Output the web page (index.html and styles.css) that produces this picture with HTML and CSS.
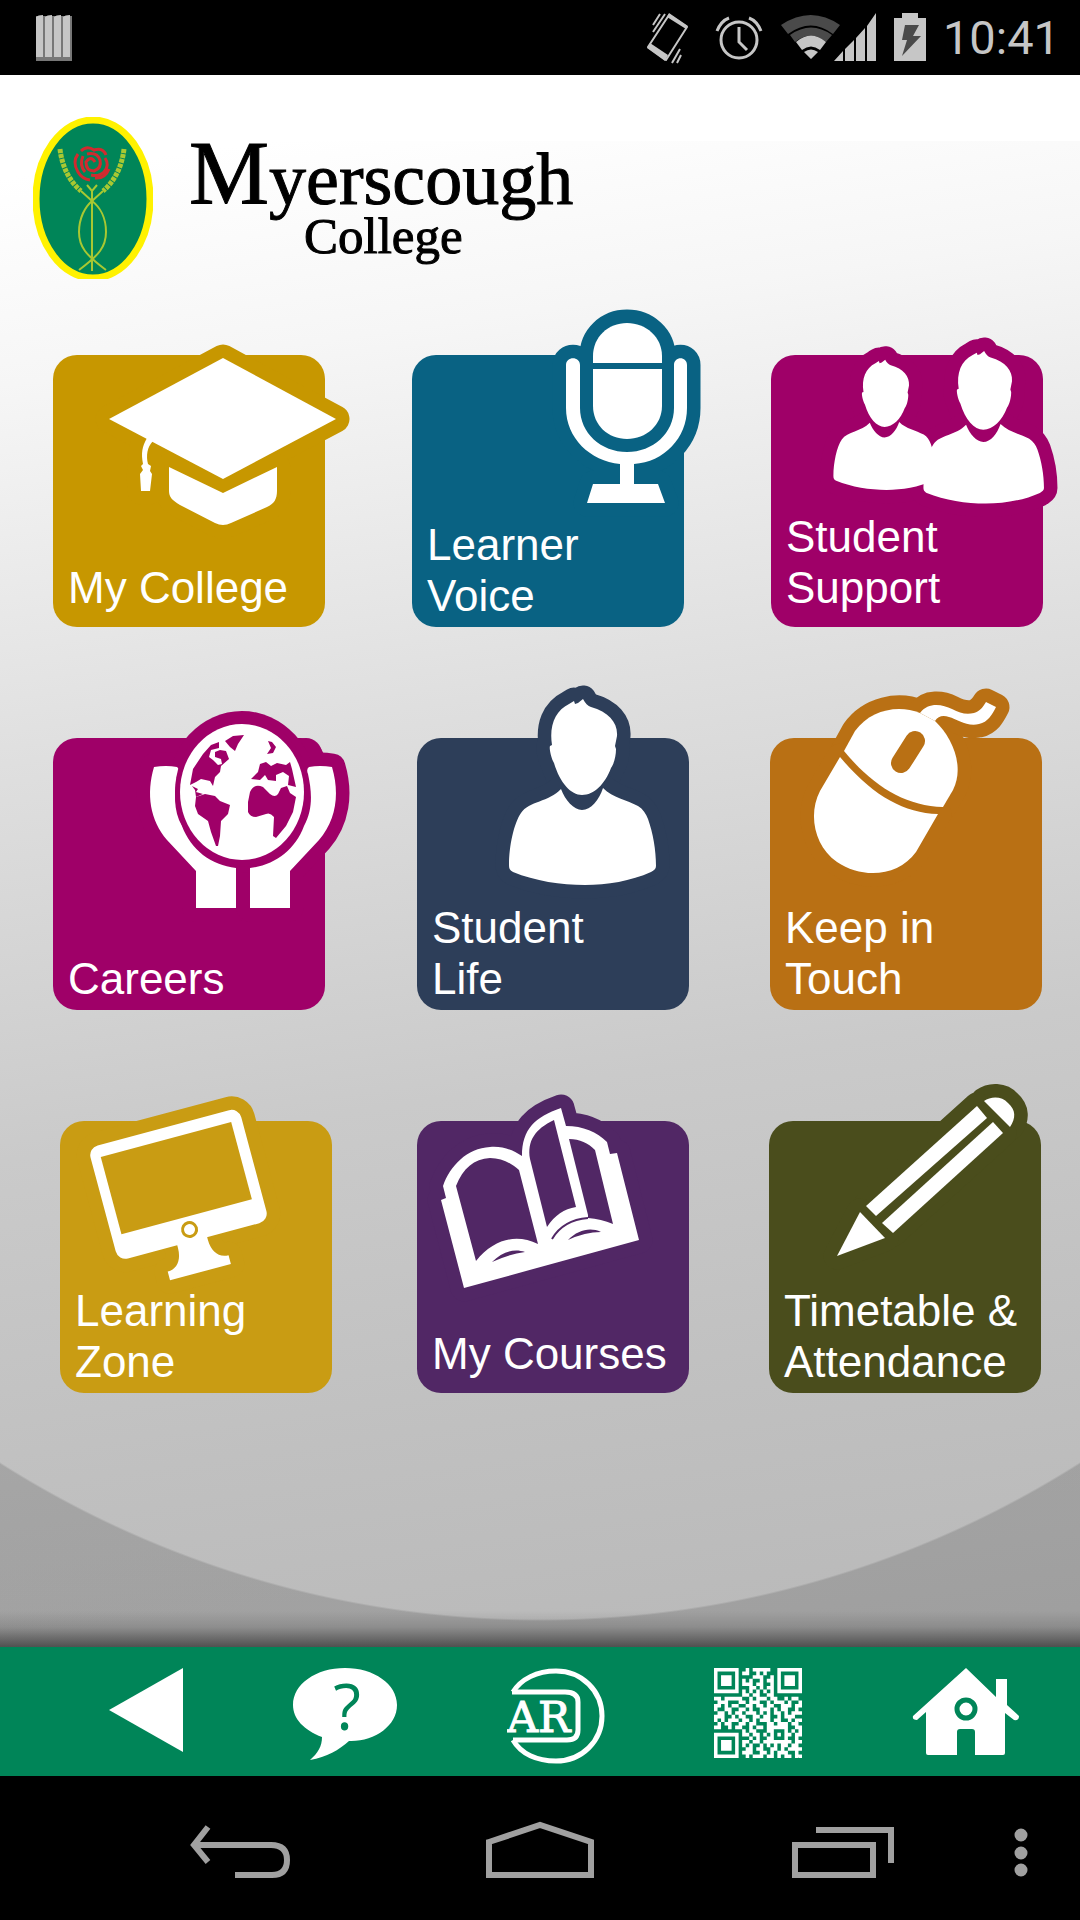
FILE: index.html
```html
<!DOCTYPE html>
<html lang="en">
<head>
  <meta charset="UTF-8" />
  <meta name="viewport" content="width=device-width, initial-scale=1.0" />
  <title>Myerscough College</title>
  <link rel="stylesheet" href="styles.css">
</head>
<body>
  <!-- shapes shared by the tiles, each drawn once as an outline and once in white -->
  <svg class="defs" aria-hidden="true">
    <defs>
      <g id="cap">
        <path d="M170 3L283 64L170 124L56 64Z"/>
        <path d="M116 112L170 138L224 112V136C224 144 221 149 214 152L178 168Q170 172 162 168L127 150C119 145 116 142 116 136Z"/>
        <path d="M94 83L100 86C94 92 93 101 95 109L98 111L97 116L99 119L97 136H88L87 119L90 115L88 111L90 109C88 98 89 92 94 83Z"/>
      </g>
      <g id="mic">
        <path d="M181 8V1C181-18 196-32 215-32S250-18 250 1V8Z"/>
        <path d="M181 14H250V51C250 70 234 84 215 84S181 70 181 51Z"/>
        <path d="M154 10C154 1 168 1 168 10V53C168 78 189 97 215 97S262 78 262 53V10C262 1 275 1 275 10V53C275 83 252 107 222 109V129H246L253 148H175L181 129H208V109C178 106 154 83 154 53Z"/>
      </g>
      <g id="person">
        <path vector-effect="non-scaling-stroke" d="M166-39C168-35 171-32 174-31C192-26 201-15 200-2L198 8L199 11C199 18 197 26 194 30C188 46 177 57 165 57C154 57 143 45 137 25C134 20 132 10 133 8L135 7C132-12 138-27 152-34L157-37L158-34L161-35Z"/>
        <path vector-effect="non-scaling-stroke" d="M144 51C148 62 157 72 165 72C174 72 182 62 186 50C196 60 210 62 221 68C226 71 229 76 231 81C236 95 239 112 239 128C239 131 237 132 234 134C214 143 190 147 168 147C144 147 118 143 96 134C93 132 92 131 92 127C92 108 97 85 104 75C112 63 132 64 144 51Z"/>
      </g>
      <g id="people">
        <use href="#person" transform="translate(-2 32) scale(.7)"/>
        <use href="#person" transform="translate(77 28) scale(.82)"/>
      </g>
      <g id="arm">
        <path d="M101 29Q113 27 124 29Q127 31 125 36C121 54 120 72 129 88C138 112 158 127 183 130V170H143V133L114 102C97 82 93 56 101 29Z"/>
      </g>
      <g id="hands">
        <use href="#arm"/>
        <use href="#arm" transform="matrix(-1 0 0 1 380 0)"/>
      </g>
      <g id="mouse">
        <path d="M74 13L85-7C100-28 128-34 150-25L165-17C182-1 195 28 183 52L173 69C135 68 103 48 74 13Z"/>
        <path d="M70 19L50 53C38 76 44 108 67 124C92 141 128 139 146 114L168 76C133 75 102 57 70 19Z"/>
        <path d="M150-25C158-36 172-34 182-29C190-25 196-23 204-25C210-27 213-31 216-36L226-31C222-23 218-16 209-14C197-11 187-19 179-21C173-23 168-22 165-17Z"/>
      </g>
      <g id="monitor">
        <rect width="156" height="117" rx="10"/>
        <path d="M61 114V120C61 132 55 140 45 140V149H108V140C98 140 92 132 92 120V114Z"/>
      </g>
      <g id="book">
        <path d="M24 79L29 77L26 65C33 45 50 27 73 26C86 25 96 29 105 35C105 8 118-4 144-13L149 5C166 5 180 11 190 21L193 33L200 32L222 119L47 167Z"/>
      </g>
      <g id="pencil">
        <path d="M215-20C222-25 233-25 239-18C247-11 247-3 241 6Z"/>
        <path d="M208-15L218-3L107 95L97 85Z"/>
        <path d="M224 1L234 12L124 112L113 102Z"/>
        <path d="M91 91L116 117L68 135Z"/>
      </g>
    </defs>
  </svg>

  <header class="status">
    <svg class="status-left" width="36" height="46" viewBox="0 0 36 46" aria-hidden="true">
      <path fill="#777" d="M0 1h36v45H0z"/>
      <path fill="#c6c6c6" d="M0 2q2-2 7-2v42H0zM9 2q2-2 7-2v42H9zM18 2q2-2 7-2v42h-7zM27 2q2-2 7-2v42h-7z"/>
    </svg>
    <svg width="54" height="52" viewBox="0 0 54 52" aria-hidden="true">
      <path fill="none" stroke="#c6c6c6" stroke-width="2" stroke-linejoin="round" d="M24 3L42 15L21 48L3 35Z"/>
      <path fill="#c6c6c6" d="M24 1L43 14L41 17L22 5ZM5 31L23 43L20 49L2 36Z"/>
      <path stroke="#c6c6c6" stroke-width="2" d="M8 13l7-11M8 20L20 2M27 51l8-14M32 51l4-8"/>
    </svg>
    <svg width="48" height="52" viewBox="0 0 48 52" aria-hidden="true">
      <g fill="none" stroke="#c6c6c6" stroke-width="3">
        <circle cx="24" cy="28" r="18"/>
        <path d="M2 19Q6 9 14 6M46 19Q42 9 34 6"/>
        <path d="M24 15V30L32 38"/>
      </g>
    </svg>
    <svg width="98" height="52" viewBox="0 0 98 52" aria-hidden="true">
      <path fill="#4a4a4a" d="M2 13Q32-7 61 13L54 22Q32 5 9 22ZM11 23Q32 8 53 23L47 30Q32 17 16 30Z"/>
      <path fill="#c6c6c6" d="M17 30Q32 17 47 30L41 38Q32 31 23 38ZM25 40Q32 35 39 40L32 47Z"/>
      <path fill="#c6c6c6" d="M55 49L64 39V49ZM66 37L75 28V49H66ZM77 26L86 16V49H77ZM88 14L97 1V49H88Z"/>
    </svg>
    <svg width="34" height="52" viewBox="0 0 34 52" aria-hidden="true">
      <path fill="#c6c6c6" d="M9 1H25V6H33V49H1V6H9Z"/>
      <path fill="#4a4a4a" d="M12 13H26L20 24H28L9 44L14 28H9Z"/>
    </svg>
    <time class="clock">10:41</time>
  </header>

  <main class="home">
    <div class="brand">
      <svg width="120" height="162" viewBox="0 0 120 162" aria-hidden="true">
        <ellipse cx="60" cy="82" rx="57" ry="79" fill="#008558" stroke="#fff200" stroke-width="7"/>
        <g fill="none" stroke="#a8c832" stroke-width="2">
          <path d="M59 74V154M54 68L59 74L64 68"/>
          <path d="M48 74L59 84C67 90 73 101 73 115C73 130 66 138 46 153"/>
          <path d="M70 74L59 84C52 90 46 101 46 115C46 130 53 138 73 153"/>
        </g>
        <g fill="none" stroke="#a8c832" stroke-width="5" stroke-dasharray="4 1">
          <path d="M27 32C29 50 37 65 48 74M91 32C89 50 81 65 70 74"/>
        </g>
        <g fill="none" stroke="#d12a2f" stroke-width="3">
          <path d="M45 37Q39 45 45 55Q49 62 57 63M48 34Q54 28 61 33Q70 30 73 38M50 39Q46 48 52 55M54 37Q64 35 67 43Q69 51 61 54Q53 54 53 45Q58 38 62 45M72 41Q77 48 71 55Q66 60 58 58M62 61Q72 62 76 52"/>
        </g>
      </svg>
      <h1 class="brand-name">
        <span class="brand-top"><span class="brand-m">M</span>yerscough</span>
        <span class="brand-sub">College</span>
      </h1>
    </div>

    <nav class="tiles">
      <div class="row row-first">
        <a class="tile gold" href="#my-college">
          <svg class="art" viewBox="0 0 272 272" aria-hidden="true">
            <use class="halo" href="#cap"/>
            <use class="shape" href="#cap"/>
          </svg>
          <span class="label label-high">My College</span>
        </a>
        <a class="tile teal" href="#learner-voice">
          <svg class="art" viewBox="0 0 272 272" aria-hidden="true">
            <use class="halo" href="#mic"/>
            <use class="shape" href="#mic"/>
          </svg>
          <span class="label">Learner<br>Voice</span>
        </a>
        <a class="tile magenta" href="#student-support">
          <svg class="art" viewBox="0 0 272 272" aria-hidden="true">
            <use class="halo" href="#people"/>
            <use class="shape" href="#people"/>
          </svg>
          <span class="label label-high">Student<br>Support</span>
        </a>
      </div>

      <div class="row row-second">
        <a class="tile magenta" href="#careers">
          <svg class="art" viewBox="0 0 272 272" aria-hidden="true">
            <use class="halo" href="#hands"/>
            <circle class="cut" cx="253" cy="16" r="16"/>
            <ellipse class="cut" cx="189" cy="54" rx="75" ry="81"/>
            <use class="shape" href="#hands"/>
            <ellipse class="cut" cx="189" cy="54" rx="67" ry="75"/>
            <ellipse class="shape" cx="189" cy="54" rx="62" ry="68"/>
            <g class="cut">
              <path d="M166 4L158 7L150 16L140 31L137 47L143 44L148 41L157 43L160 48L162 39L167 34L168 28L176 21L173 13L167 12L162 14V19L168 21L169 26L165 27L160 22L156 19L158 12L166 10Z"/>
              <path d="M139 48L145 51L143 54L150 56L143 59L142 52Z"/>
              <path d="M172 3L180-2L191-3L185 6L182 13L177 9Z"/>
              <path d="M143 59L152 56L162 58L167 63L177 67L175 76L168 83L167 98L165 108H163L158 94L155 83L145 76L142 68Z"/>
              <path d="M197 54Q201 45 210 49L217 56Q222 60 225 56L228 50L234 48L237 55L243 59L240 74L233 88L223 100L220 98L221 79Q217 74 213 76L203 79Q197 79 195 74V64Z"/>
              <path d="M198 41L205 34L207 26L213 24L218 28L224 25L233 27L237 24L239 31L243 49L235 47L236 38L230 34L223 37V43L215 42L212 37L207 42Z"/>
              <path d="M215 3L219 4L223 9L220 15L214 16L218 10Z"/>
            </g>
          </svg>
          <span class="label">Careers</span>
        </a>
        <a class="tile navy" href="#student-life">
          <svg class="art" viewBox="0 0 272 272" aria-hidden="true">
            <use class="halo" href="#person"/>
            <use class="shape" href="#person"/>
          </svg>
          <span class="label">Student<br>Life</span>
        </a>
        <a class="tile orange" href="#keep-in-touch">
          <svg class="art" viewBox="0 0 272 272" aria-hidden="true">
            <use class="halo" href="#mouse"/>
            <use class="shape" href="#mouse"/>
            <path class="line" stroke-width="20" stroke-linecap="round" d="M145 3L131 25"/>
          </svg>
          <span class="label">Keep in<br>Touch</span>
        </a>
      </div>

      <div class="row row-third">
        <a class="tile amber" href="#learning-zone">
          <svg class="art" viewBox="0 0 272 272" aria-hidden="true">
            <g transform="translate(28 27) rotate(-15)">
              <use class="halo" href="#monitor"/>
              <use class="shape" href="#monitor"/>
              <rect class="cut" x="10" y="12" width="135" height="80"/>
              <circle class="line" stroke-width="3" cx="77" cy="105" r="7"/>
            </g>
          </svg>
          <span class="label">Learning<br>Zone</span>
        </a>
        <a class="tile purple" href="#my-courses">
          <svg class="art" viewBox="0 0 272 272" aria-hidden="true">
            <use class="halo" href="#book"/>
            <use class="shape" href="#book"/>
            <g class="cut">
              <path d="M39 65C46 47 57 38 73 37C85 37 94 42 102 49L121 123C100 113 78 117 59 140Z"/>
              <path d="M137-1C118 8 110 20 113 38L130 106C138 94 147 88 159 86Z"/>
              <path d="M152 18C163 18 171 22 178 29L196 103Q184 98 171 97V94Z"/>
              <path d="M75 141C85 131 97 127 108 131Q92 133 75 141ZM151 119C161 109 173 106 184 111Q168 111 151 119Z"/>
            </g>
            <path class="line" stroke-width="2" d="M135 118Q146 99 171 97"/>
          </svg>
          <span class="label label-high">My Courses</span>
        </a>
        <a class="tile olive" href="#timetable">
          <svg class="art" viewBox="0 0 272 272" aria-hidden="true">
            <use class="halo" href="#pencil"/>
            <use class="shape" href="#pencil"/>
          </svg>
          <span class="label">Timetable &amp;<br>Attendance</span>
        </a>
      </div>
    </nav>
  </main>

  <nav class="toolbar">
    <a href="#back" aria-label="Back">
      <svg width="74" height="96" viewBox="0 0 74 96"><path fill="#fff" d="M74 0V84L0 42Z"/></svg>
    </a>
    <a href="#help" aria-label="Help">
      <svg class="help" width="104" height="96" viewBox="0 0 104 96">
        <path fill="#fff" d="M52 0C81 0 104 16 104 37S81 74 56 73C46 82 34 89 17 92C25 85 29 78 29 69C11 62 0 51 0 37C0 16 23 0 52 0Z"/>
        <text class="mark" x="54" y="62">?</text>
      </svg>
    </a>
    <a href="#ar" aria-label="Augmented reality">
      <svg width="98" height="96" viewBox="0 0 98 96">
        <g fill="none" stroke="#fff" stroke-width="5">
          <path d="M6 24C14 11 30 3 49 3C75 3 95 23 95 48S75 93 49 93C30 93 14 86 6 72"/>
          <path d="M5 24H58Q71 24 71 34V62Q71 72 60 72H6"/>
        </g>
        <text class="ar" x="0" y="64">AR</text>
      </svg>
    </a>
    <a href="#scan" aria-label="Scan code">
      <svg id="qr" width="88" height="90" viewBox="0 0 25 25" preserveAspectRatio="none"></svg>
    </a>
    <a href="#home" aria-label="Home">
      <svg width="108" height="96" viewBox="0 0 108 96">
        <path fill="#fff" d="M54 0L84 29V11H95V37L107 48Q107 53 102 52L93 45V85Q93 87 91 87H63V64Q63 61 60 61H48Q45 61 45 64V87H16Q14 87 14 85V44L5 52Q0 52 1 48Z"/>
        <circle cx="54" cy="41" r="9" fill="#fff" stroke="#008558" stroke-width="5"/>
      </svg>
    </a>
  </nav>

  <footer class="softkeys">
    <button class="key" aria-label="Back">
      <svg width="100" height="58" viewBox="0 0 100 58"><path d="M18 6L4 24L18 41M4 24H81Q97 24 97 39T82 54H45"/></svg>
    </button>
    <button class="key" aria-label="Home">
      <svg width="108" height="58" viewBox="0 0 108 58"><path d="M3 21L54 4L105 21V54H3Z"/></svg>
    </button>
    <button class="key" aria-label="Recent apps">
      <svg width="102" height="58" viewBox="0 0 102 58"><path d="M6 24H84V54H6ZM27 9H102V42"/></svg>
    </button>
    <button class="key key-menu" aria-label="Menu">
      <svg width="14" height="58" viewBox="0 0 14 58"><path class="dots" d="M7 14h0M7 32h0M7 49h0"/></svg>
    </button>
  </footer>

  <script src="script.js"></script>
</body>
</html>
```
FILE: styles.css
```css
* {
  box-sizing: border-box;
  margin: 0;
  padding: 0;
}

body {
  display: flex;
  flex-direction: column;
  min-height: 100vh;
  background: #000;
  font-family: "Liberation Sans", Arial, sans-serif;
}

svg {
  display: block;
}

.defs {
  position: absolute;
  width: 0;
  height: 0;
}

/* status bar */
.status {
  display: flex;
  align-items: center;
  gap: 16px;
  height: 75px;
  padding: 0 20px 0 36px;
  background: #000;
}

.status-left {
  margin-right: auto;
}

.clock {
  color: #c6c6c6;
  font-family: Roboto, sans-serif;
  font-size: 47px;
  line-height: 75px;
}

/* page */
.home {
  flex: 1;
  padding-top: 42px;
  background:
    linear-gradient(#fff 66px, transparent 66px),
    linear-gradient(transparent calc(100% - 36px), rgba(0, 0, 0, 0.12) calc(100% - 20px), rgba(0, 0, 0, 0.5)),
    radial-gradient(circle at 50% calc(100% - 1034px), transparent 1006px, rgba(0, 0, 0, 0.14) 1008px),
    linear-gradient(172deg, #fff 6%, #f6f6f6 18%, #dfdfdf 40%, #cacaca 63%, #c0c0c0 82%, #b8b8b8 100%);
}

.brand {
  display: flex;
  gap: 36px;
  padding-left: 33px;
}

.brand-name {
  color: #000;
  font-family: "Liberation Serif", "Times New Roman", serif;
  font-weight: normal;
  -webkit-text-stroke: 1px #000;
}

.brand-top,
.brand-sub {
  display: block;
}

.brand-top {
  padding-top: 26px;
  font-size: 74px;
  line-height: 62px;
}

.brand-m {
  font-size: 90px;
}

.brand-sub {
  padding-left: 115px;
  font-size: 51px;
  line-height: 52px;
}

.tiles {
  display: flex;
  flex-direction: column;
  gap: 111px;
  padding-top: 76px;
}

.row {
  display: grid;
  padding-left: 53px;
}

.row-first {
  grid-template-columns: 359fr 359fr 309fr;
}

.row-second {
  grid-template-columns: 364fr 353fr 310fr;
}

.row-third {
  grid-template-columns: 357fr 352fr 311fr;
  padding-left: 60px;
}

.tile {
  position: relative;
  display: flex;
  align-items: flex-end;
  width: 272px;
  height: 272px;
  border-radius: 24px;
  background: var(--tile);
  color: #fff;
  text-decoration: none;
}

.gold { --tile: #c79700; }
.teal { --tile: #096283; }
.magenta { --tile: #9f0068; }
.navy { --tile: #2d3e59; }
.orange { --tile: #b97014; }
.amber { --tile: #c99c13; }
.purple { --tile: #512765; }
.olive { --tile: #4a4d1c; }

/* the drawing runs over the edge of its tile */
.art {
  position: absolute;
  top: 0;
  left: 0;
  width: 100%;
  height: 100%;
  overflow: visible;
}

.halo {
  fill: var(--tile);
  stroke: var(--tile);
  stroke-width: 27px;
  stroke-linejoin: round;
}

.shape {
  fill: #fff;
}

.cut {
  fill: var(--tile);
}

.line {
  fill: none;
  stroke: var(--tile);
}

.label {
  position: relative;
  padding: 0 0 6px 15px;
  font-size: 44px;
  line-height: 51px;
  white-space: nowrap;
}

.label-high {
  padding-bottom: 14px;
}

/* green bar */
.toolbar {
  display: flex;
  justify-content: space-between;
  align-items: flex-start;
  height: 129px;
  padding: 21px 60px 0 109px;
  background: #008558;
}

.help {
  overflow: visible;
}

.mark {
  fill: #008558;
  font-family: "Open Sans", sans-serif;
  font-size: 64px;
  text-anchor: middle;
}

.ar {
  fill: #fff;
  stroke: #fff;
  stroke-width: 1px;
  font-family: "DejaVu Serif", serif;
  font-size: 43px;
}

/* android keys */
.softkeys {
  display: grid;
  grid-template-columns: 1fr 1fr 1fr 90px;
  align-items: start;
  height: 144px;
  padding: 45px 0 0 90px;
  background: #000;
}

.key {
  justify-self: center;
  border: none;
  background: none;
  cursor: pointer;
}

.key svg {
  overflow: visible;
}

.key path {
  fill: none;
  stroke: #a0a0a0;
  stroke-width: 6px;
}

.key-menu {
  justify-self: start;
  padding-left: 24px;
}

.key .dots {
  stroke-width: 13px;
  stroke-linecap: round;
}
```
FILE: script.js
```javascript
// modules of the QR icon, one string per line
const modules = [
  '#######..#.#####..#######',
  '#.....#.##..#.#...#.....#',
  '#.###.#....###..#.#.###.#',
  '#.###.#.#.#..#.##.#.###.#',
  '#.###.#.###.##..#.#.###.#',
  '#.....#...##.#.##.#.....#',
  '#######.#.#.#.#.#.#######',
  '........##.##..##........',
  '##.#####..#.###.##..#.##.',
  '.###...##.###..#.###.#..#',
  '##.#.##..##.##.##..###.##',
  '#..##..##.#..###.#.##..#.',
  '.##.#.##.###.#.#.##.#.###',
  '###..#.##..##.##..#.###..',
  '#.#.###.##.#.###.##..#.##',
  '.#.##..##.##...##.###.##.',
  '##..#.##..#.##.######..##',
  '........#.##...##...#.#.#',
  '#######.##.##.#.#.#.##.##',
  '#.....#...#.#..##...#..#.',
  '#.###.#.##.##.########.##',
  '#.###.#.#.#..#.#.#.##.##.',
  '#.###.#..##.##..##.#.####',
  '#.....#.###..##.#.###..#.',
  '#######..#.###.##.#.##.##'
];

let d = '';
modules.forEach((line, y) => {
  [...line].forEach((m, x) => {
    if (m === '#') d += `M${x} ${y}h1v1h-1z`;
  });
});

const path = document.createElementNS('http://www.w3.org/2000/svg', 'path');
path.setAttribute('d', d);
path.setAttribute('fill', '#fff');
document.getElementById('qr').appendChild(path);
```
